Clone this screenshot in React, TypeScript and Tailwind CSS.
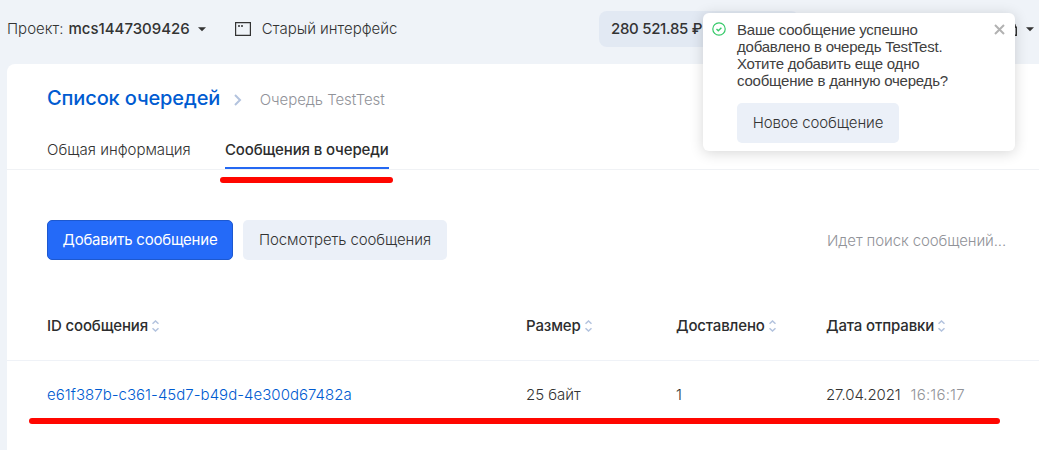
import React from "react";

function Sort() {
  return (
    <svg className="ml-1 h-3 w-[7px] shrink-0" viewBox="0 0 7 12" fill="none" stroke="#b3c3de" strokeWidth="1.5">
      <path d="M.5 3.8 3.5 1l3 2.8M.5 8.2l3 2.8 3-2.8" />
    </svg>
  );
}

function Caret() {
  return (
    <svg className="h-[5px] w-2 shrink-0" viewBox="0 0 8 5" fill="#333">
      <path d="M0 .2h8L4 4.2z" />
    </svg>
  );
}

function Head({ label }: { label: string }) {
  return (
    <div className="flex items-center pt-[2px] font-medium tracking-[-0.14px] text-[#2c2d2e]">
      <span>{label}</span>
      <Sort />
    </div>
  );
}

const columns = "grid grid-cols-[479px_150px_150px_1fr] items-center pl-10";

export default function App() {
  return (
    <div className="relative h-[450px] w-[1039px] overflow-hidden bg-[#eff3f8] font-['Inter','Liberation_Sans',sans-serif] text-[15px] leading-5 font-light whitespace-nowrap text-[#333]">
      <header className="flex h-16 items-start justify-between pr-[5px] pl-[7px]">
        <div className="flex h-[58px] items-center">
          <span>Проект:</span>
          <span className="ml-[5px] font-medium">mcs1447309426</span>
          <span className="ml-2"><Caret /></span>
          <svg className="ml-[29px] h-[14px] w-4" viewBox="0 0 16 14" fill="none" stroke="#333">
            <path d="M.6.6h14.8v12.8H.6z" strokeWidth="1.2" />
            <path d="M3 4h2M6 4h2" strokeWidth="1.5" />
          </svg>
          <span className="ml-[11px]">Старый интерфейс</span>
        </div>
        <div className="flex h-[58px] items-center">
          <div className="mr-[206px] flex h-9 w-[200px] items-center rounded-lg bg-[#e2e9f3] pl-3 font-medium tracking-[-0.3px]">280 521.85 ₽</div>
          <svg className="mr-[9px] h-[14px] w-3" viewBox="0 0 12 14" fill="none" stroke="#333" strokeWidth="1.5">
            <path d="M.7 5.2h10.6v8.1H.7zM2.5 5.2V4A3.3 3.3 0 0 1 5.8.8h1A3.3 3.3 0 0 1 10.2 4v1.2" />
          </svg>
          <Caret />
        </div>
      </header>

      <main className="ml-[7px] h-[386px] rounded-tl-lg bg-white">
        <div className="flex h-[68px] items-center pl-10">
          <span className="text-xl font-medium tracking-[-0.13px] text-[#005bd1]">Список очередей</span>
          <svg className="ml-[14px] mt-1 h-3 w-2" viewBox="0 0 8 12" fill="none" stroke="#b3c3de" strokeWidth="2">
            <path d="m1 1 5 5-5 5" />
          </svg>
          <span className="mt-1 ml-[17.5px] tracking-[-0.06px] text-[#919399]">Очередь TestTest</span>
        </div>
        <nav className="flex h-[38px] gap-[35px] border-b border-[#f0f2f5] pl-10">
          <span className="w-[143px] pt-2">Общая информация</span>
          <span className="h-[37px] border-b-2 border-[#2468f2] pt-2 font-medium tracking-[-0.13px] text-[#2c2d2e]">Сообщения в очереди</span>
        </nav>
        <div className="flex h-[120px] items-start pt-[50px] pl-10">
          <button className="h-10 w-[186px] rounded-[5px] border border-[#1d58cf] bg-[#246af8] font-normal tracking-[-0.22px] text-white">Добавить сообщение</button>
          <button className="ml-[10px] h-10 w-[204px] rounded-[5px] bg-[#ebf0f8] font-light tracking-[-0.1px]">Посмотреть сообщения</button>
          <span className="ml-auto pt-[11px] pr-[33px] tracking-[-0.12px] text-[#919399]">Идет поиск сообщений...</span>
        </div>
        <div className={columns + " h-[71px] border-b border-[#eff2f7]"}>
          <Head label="ID сообщения" />
          <Head label="Размер" />
          <Head label="Доставлено" />
          <Head label="Дата отправки" />
        </div>
        <div className={columns + " h-[68px]"}>
          <span className="tracking-[0.03px] text-[#005bd1]">e61f387b-c361-45d7-b49d-4e300d67482a</span>
          <span>25 байт</span>
          <span>1</span>
          <span><span className="tracking-[-0.1px]">27.04.2021</span><span className="ml-[10px] tracking-[0.2px] text-[#919399]">16:16:17</span></span>
        </div>
      </main>

      <div className="absolute top-[177px] left-[220px] h-[6px] w-[173px] rounded-full bg-[#ff0600]" />
      <div className="absolute top-[418px] left-[29px] h-[6px] w-[971px] rounded-full bg-[#ff0600]" />

      <aside className="absolute top-[13px] left-[703px] flex h-[138px] w-[312px] items-start rounded-md bg-white pt-2 pl-[9px] shadow-[0_2px_14px_rgba(0,0,0,0.16)]">
        <svg className="mt-px h-[14px] w-[14px]" viewBox="0 0 14 14" fill="none" stroke="#35c968" strokeWidth="1.2">
          <circle cx="7" cy="7" r="6.2" />
          <path d="m4.5 7 1.8 1.7 3.1-3" strokeWidth="1.4" />
        </svg>
        <div className="ml-[11px]">
          <p className="font-['Liberation_Sans',Arial,sans-serif] leading-[17px] font-normal tracking-[-0.22px] text-[#404040]">
            Ваше сообщение успешно<br />добавлено в очередь TestTest.<br />Хотите добавить еще одно<br />сообщение в данную очередь?
          </p>
          <button className="mt-[14px] h-10 w-[162px] rounded-[5px] bg-[#ebf0f8] tracking-[-0.1px]">Новое сообщение</button>
        </div>
        <svg className="absolute top-[11px] right-[10px] h-[11px] w-[11px]" viewBox="0 0 11 11" stroke="#b2b2b2" strokeWidth="2">
          <path d="m1 1 9 9M10 1l-9 9" />
        </svg>
      </aside>
    </div>
  );
}
